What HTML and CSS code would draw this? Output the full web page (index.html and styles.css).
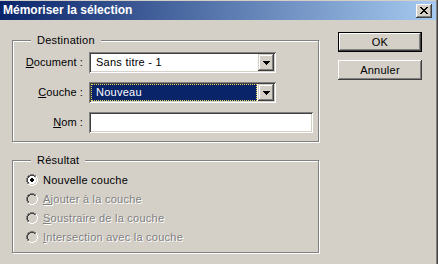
FILE: index.html
```html
<!DOCTYPE html>
<html>
<head>
<meta charset="utf-8">
<link rel="stylesheet" href="styles.css">
</head>
<body>
<svg class="defs" width="0" height="0">
  <defs>
    <clipPath id="tl"><polygon points="0,0 12,0 0,12"/></clipPath>
  </defs>
</svg>
<div class="window">
  <div class="titlebar">
    <span class="title">Mémoriser la sélection</span>
    <span class="close"><svg width="8" height="7" viewBox="0 0 8 7" shape-rendering="crispEdges"><g fill="#000"><rect x="0" y="0" width="2" height="1"/><rect x="6" y="0" width="2" height="1"/><rect x="1" y="1" width="2" height="1"/><rect x="5" y="1" width="2" height="1"/><rect x="2" y="2" width="4" height="1"/><rect x="3" y="3" width="2" height="1"/><rect x="2" y="4" width="4" height="1"/><rect x="1" y="5" width="2" height="1"/><rect x="5" y="5" width="2" height="1"/><rect x="0" y="6" width="2" height="1"/><rect x="6" y="6" width="2" height="1"/></g></svg></span>
  </div>
  <div class="content">
    <div class="left">
      <div class="group dest">
        <span class="legend">Destination</span>
        <div class="form">
          <label class="lbl"><u>D</u>ocument :</label>
          <div class="combo w-combo">
            <span class="combo-text">Sans titre - 1</span>
            <span class="drop"><svg width="7" height="4" viewBox="0 0 7 4" shape-rendering="crispEdges"><g fill="#000"><rect x="0" y="0" width="7" height="1"/><rect x="1" y="1" width="5" height="1"/><rect x="2" y="2" width="3" height="1"/><rect x="3" y="3" width="1" height="1"/></g></svg></span>
          </div>
          <label class="lbl"><u>C</u>ouche :</label>
          <div class="combo w-combo">
            <span class="combo-text selected">Nouveau</span>
            <span class="drop"><svg width="7" height="4" viewBox="0 0 7 4" shape-rendering="crispEdges"><g fill="#000"><rect x="0" y="0" width="7" height="1"/><rect x="1" y="1" width="5" height="1"/><rect x="2" y="2" width="3" height="1"/><rect x="3" y="3" width="1" height="1"/></g></svg></span>
          </div>
          <label class="lbl"><u>N</u>om :</label>
          <div class="field w-field"></div>
        </div>
      </div>
      <div class="group result">
        <span class="legend">Résultat</span>
        <div class="radios">
          <div class="radio-row">
            <svg class="radio" width="12" height="12" viewBox="0 0 12 12" shape-rendering="crispEdges"><circle cx="6" cy="6" r="6" fill="#fff"/><circle cx="6" cy="6" r="6" fill="#808080" clip-path="url(#tl)"/><circle cx="6" cy="6" r="5" fill="#d4d0c8"/><circle cx="6" cy="6" r="5" fill="#404040" clip-path="url(#tl)"/><circle cx="6" cy="6" r="4" fill="#fff"/><rect x="4" y="5" width="4" height="2" fill="#000"/><rect x="5" y="4" width="2" height="4" fill="#000"/></svg>
            <span>Nouvelle couche</span>
          </div>
          <div class="radio-row disabled">
            <svg class="radio" width="12" height="12" viewBox="0 0 12 12" shape-rendering="crispEdges"><circle cx="6" cy="6" r="6" fill="#fff"/><circle cx="6" cy="6" r="6" fill="#808080" clip-path="url(#tl)"/><circle cx="6" cy="6" r="5" fill="#d4d0c8"/><circle cx="6" cy="6" r="5" fill="#404040" clip-path="url(#tl)"/><circle cx="6" cy="6" r="4" fill="#d4d0c8"/></svg>
            <span><u>A</u>jouter à la couche</span>
          </div>
          <div class="radio-row disabled">
            <svg class="radio" width="12" height="12" viewBox="0 0 12 12" shape-rendering="crispEdges"><circle cx="6" cy="6" r="6" fill="#fff"/><circle cx="6" cy="6" r="6" fill="#808080" clip-path="url(#tl)"/><circle cx="6" cy="6" r="5" fill="#d4d0c8"/><circle cx="6" cy="6" r="5" fill="#404040" clip-path="url(#tl)"/><circle cx="6" cy="6" r="4" fill="#d4d0c8"/></svg>
            <span><u>S</u>oustraire de la couche</span>
          </div>
          <div class="radio-row disabled">
            <svg class="radio" width="12" height="12" viewBox="0 0 12 12" shape-rendering="crispEdges"><circle cx="6" cy="6" r="6" fill="#fff"/><circle cx="6" cy="6" r="6" fill="#808080" clip-path="url(#tl)"/><circle cx="6" cy="6" r="5" fill="#d4d0c8"/><circle cx="6" cy="6" r="5" fill="#404040" clip-path="url(#tl)"/><circle cx="6" cy="6" r="4" fill="#d4d0c8"/></svg>
            <span><u>I</u>ntersection avec la couche</span>
          </div>
        </div>
      </div>
    </div>
    <div class="right">
      <button class="btn default"><span>OK</span></button>
      <button class="btn"><span>Annuler</span></button>
    </div>
  </div>
</div>
</body>
</html>
```
FILE: styles.css
```css
* { box-sizing: border-box; }
html, body { margin: 0; padding: 0; background: #d4d0c8; }
body { width: 438px; height: 264px; overflow: hidden; font-family: "Liberation Sans", Arial, sans-serif; font-size: 11px; letter-spacing: 0.25px; color: #000; }
.defs { position: absolute; width: 0; height: 0; }
.window { width: 438px; height: 264px; background: #d4d0c8; padding-top: 1px; border-right: 1px solid #404040; box-shadow: inset -1px 0 0 #808080; }
.titlebar { height: 19px; margin-right: 1px; background: linear-gradient(to right, #0a246a, #a6caf0); display: flex; align-items: center; justify-content: space-between; padding: 0 4px 0 3px; }
.title { color: #fff; font-weight: bold; font-size: 12px; letter-spacing: 0; line-height: 19px; }
.close { width: 16px; height: 14px; background: #d4d0c8; display: flex; align-items: center; justify-content: center; padding-right: 1px; box-shadow: inset -1px -1px 0 #404040, inset 1px 1px 0 #fff, inset -2px -2px 0 #808080; }
.content { display: flex; padding: 12px 0 0 12px; }
.left { width: 308px; display: flex; flex-direction: column; gap: 18px; margin-top: 8px; }
.group { position: relative; border: 1px solid #808080; box-shadow: inset 1px 1px 0 #fff, 1px 1px 0 #fff; margin-right: 1px; }
.dest { height: 102px; }
.result { height: 93px; }
.legend { position: absolute; top: -7px; left: 18px; padding: 0 6px; background: #d4d0c8; line-height: 13px; }
.form { display: grid; grid-template-columns: 70px auto; column-gap: 6px; row-gap: 9px; padding-top: 11px; align-items: center; justify-items: start; }
.lbl { justify-self: end; line-height: 21px; letter-spacing: 0.1px; }
.combo, .field { height: 21px; background: #fff; box-shadow: inset 1px 1px 0 #808080, inset -1px -1px 0 #fff, inset 2px 2px 0 #404040, inset -2px -2px 0 #d4d0c8; display: flex; align-items: center; padding: 2px; }
.w-combo { width: 187px; }
.w-field { width: 224px; }
.combo-text { flex: 1; height: 17px; line-height: 15px; padding-left: 4px; margin-right: 1px; border: 1px solid transparent; }
.combo-text.selected { background: #0a246a; color: #fff; border: 1px dotted #e8d84a; }
.drop { width: 16px; height: 17px; background: #d4d0c8; display: flex; align-items: center; justify-content: center; box-shadow: inset -1px -1px 0 #404040, inset 1px 1px 0 #d4d0c8, inset -2px -2px 0 #808080, inset 2px 2px 0 #fff; }
.radios { display: flex; flex-direction: column; padding: 9px 0 0 13px; }
.radio-row { display: flex; align-items: center; height: 19px; gap: 5px; }
.radio { flex: none; }
.disabled span { color: #808080; text-shadow: 1px 1px 0 #fff; }
.right { display: flex; flex-direction: column; gap: 8px; margin-left: 18px; }
.btn { width: 84px; height: 20px; padding: 0; margin: 0; font: inherit; letter-spacing: 0.25px; color: #000; background: #d4d0c8; border: none; box-shadow: inset -1px -1px 0 #404040, inset 1px 1px 0 #fff, inset -2px -2px 0 #808080; display: flex; align-items: center; justify-content: center; }
.btn.default { box-shadow: inset 0 0 0 1px #000, inset -2px -2px 0 #404040, inset 2px 2px 0 #fff, inset -3px -3px 0 #808080; }
u { text-decoration: underline; text-underline-offset: 1px; }
```
